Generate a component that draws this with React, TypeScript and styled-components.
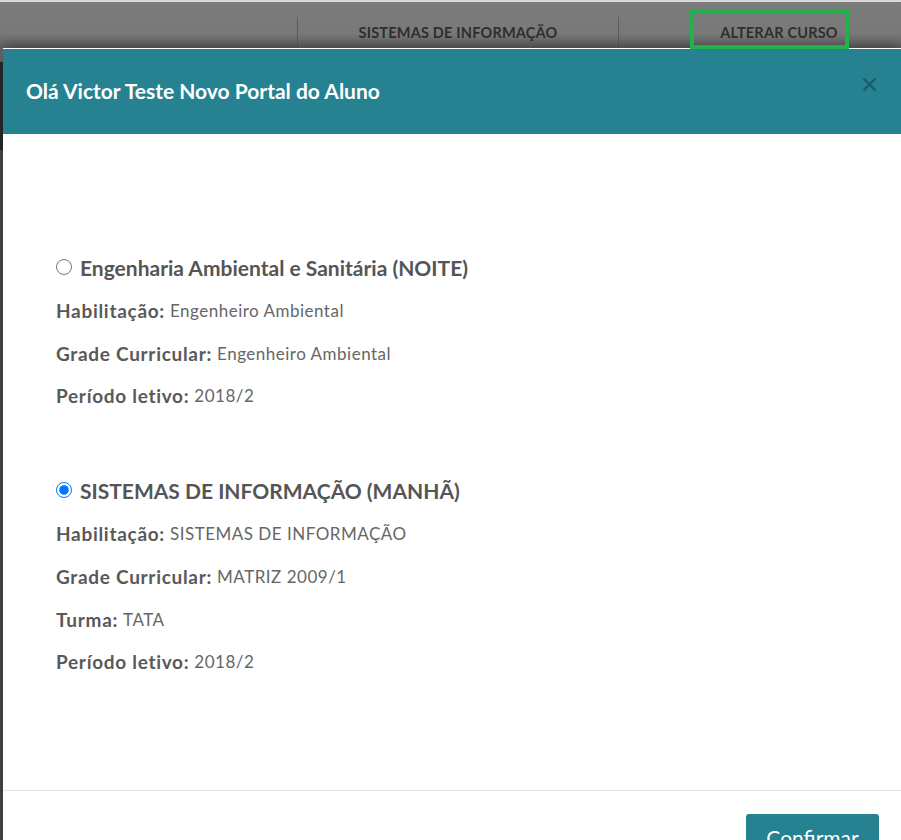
import React from 'react'
import styled, { createGlobalStyle } from 'styled-components'

const GlobalStyle = createGlobalStyle`
  html, body {
    margin: 0;
    padding: 0;
    height: 100%;
    overflow: hidden;
    background: #4b4b4b;
    font-family: Lato, "Open Sans", Arial, sans-serif;
  }
  #root {
    height: 100%;
  }
`

const Page = styled.div`
  position: relative;
  height: 840px;
  display: flex;
  flex-direction: column;
  background: #4b4b4b;
`

const TopStrip = styled.div`
  height: 2px;
  background: #d9d9d9;
`

const NavBar = styled.nav`
  height: 46px;
  background: linear-gradient(#7b7b7b 0%, #797979 70%, #646464 100%);
  display: flex;
  padding-left: 297px;
  box-sizing: border-box;
  overflow: hidden;
`

const NavItem = styled.div`
  flex: 0 0 320px;
  margin-top: 15px;
  border-left: 1px solid #5c5c5c;
  display: flex;
  align-items: center;
  justify-content: center;
  font-size: 14.5px;
  font-weight: 700;
  color: #2f2f2f;
  text-transform: uppercase;
  letter-spacing: 0.2px;
`

const SubBar = styled.div`
  height: 14px;
  background: #6c6c6c;
`

const DarkBand = styled.div`
  height: 88px;
  background: #2b2b2b;
`

const Highlight = styled.div`
  position: absolute;
  left: 690px;
  top: 9px;
  width: 159px;
  height: 40px;
  box-sizing: border-box;
  border: 4px solid #22b24c;
  z-index: 20;
`

const Modal = styled.div`
  position: absolute;
  top: 48px;
  left: 3px;
  right: 0;
  height: 820px;
  background: #fff;
  border-top: 1px solid #fff;
  box-shadow: 0 -3px 12px rgba(0, 0, 0, 0.35);
  display: flex;
  flex-direction: column;
  z-index: 10;
`

const Header = styled.div`
  height: 85px;
  background: #268290;
  display: flex;
  align-items: center;
  justify-content: space-between;
  padding: 0 24px 0 23px;
`

const Title = styled.h4`
  margin: 0;
  color: #fff;
  font-size: 21px;
  font-weight: 700;
  padding-bottom: 2px;
`

const Close = styled.button`
  border: 0;
  background: none;
  padding: 0;
  margin-top: -14px;
  display: flex;
  cursor: pointer;
  opacity: 0.28;
`

const Body = styled.div`
  padding: 112px 53px 0;
  height: 656px;
  box-sizing: border-box;
  display: flex;
  flex-direction: column;
  gap: 52px;
`

const Course = styled.div`
  display: flex;
  flex-direction: column;
`

const CourseName = styled.label`
  display: flex;
  align-items: center;
  gap: 8px;
  height: 43px;
  font-size: 21px;
  font-weight: 700;
  color: #555;
`

const Radio = styled.input`
  width: 16px;
  height: 16px;
  margin: 0 0 2px;
`

const Line = styled.div`
  height: 42.75px;
  display: flex;
  align-items: center;
  color: #666;
  font-size: 17px;
  letter-spacing: 0.5px;

  b {
    font-size: 19px;
    font-weight: 700;
    color: #595959;
    margin-right: 5px;
    letter-spacing: 0.7px;
  }
`

const Footer = styled.div`
  border-top: 1px solid #e5e5e5;
  padding: 23px 22px 0;
  display: flex;
  justify-content: flex-end;
`

const ConfirmButton = styled.button`
  width: 133px;
  height: 46px;
  background: #268290;
  border: 0;
  border-radius: 3px;
  color: #fff;
  font-family: Lato, "Open Sans", Arial, sans-serif;
  font-size: 21px;
  padding: 0;
`

type CourseData = {
  name: string
  selected: boolean
  details: [string, string][]
}

const courses: CourseData[] = [
  {
    name: 'Engenharia Ambiental e Sanitária (NOITE)',
    selected: false,
    details: [
      ['Habilitação:', 'Engenheiro Ambiental'],
      ['Grade Curricular:', 'Engenheiro Ambiental'],
      ['Período letivo:', '2018/2'],
    ],
  },
  {
    name: 'SISTEMAS DE INFORMAÇÃO (MANHÃ)',
    selected: true,
    details: [
      ['Habilitação:', 'SISTEMAS DE INFORMAÇÃO'],
      ['Grade Curricular:', 'MATRIZ 2009/1'],
      ['Turma:', 'TATA'],
      ['Período letivo:', '2018/2'],
    ],
  },
]

export default function App() {
  return (
    <>
      <GlobalStyle />
      <Page>
        <TopStrip />
        <NavBar>
          <NavItem>Sistemas de Informação</NavItem>
          <NavItem>Alterar Curso</NavItem>
        </NavBar>
        <SubBar />
        <DarkBand />
        <Highlight />
        <Modal>
          <Header>
            <Title>Olá Victor Teste Novo Portal do Aluno</Title>
            <Close aria-label="Fechar">
              <svg width="15" height="15" viewBox="0 0 15 15">
                <path d="M1.5 1.5 L13.5 13.5 M13.5 1.5 L1.5 13.5" stroke="#000" strokeWidth="2.4" />
              </svg>
            </Close>
          </Header>
          <Body>
            {courses.map((c, i) => (
              <Course key={i}>
                <CourseName>
                  <Radio type="radio" name="curso" defaultChecked={c.selected} />
                  {c.name}
                </CourseName>
                {c.details.map(([label, value], j) => (
                  <Line key={j}>
                    <b>{label}</b>
                    {value}
                  </Line>
                ))}
              </Course>
            ))}
          </Body>
          <Footer>
            <ConfirmButton>Confirmar</ConfirmButton>
          </Footer>
        </Modal>
      </Page>
    </>
  )
}
